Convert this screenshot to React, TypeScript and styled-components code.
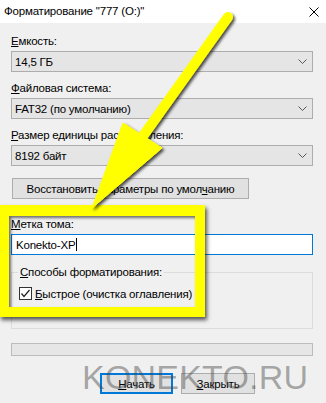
import styled, { createGlobalStyle } from 'styled-components';

const GlobalStyle = createGlobalStyle`
  html, body {
    margin: 0;
    padding: 0;
    background: #f0f0f0;
  }
  body {
    font-family: "Liberation Sans", Arial, sans-serif;
    font-size: 11.5px;
    letter-spacing: -0.2px;
    color: #000;
  }
`;

const Window = styled.div`
  position: relative;
  width: 326px;
  height: 403px;
  overflow: hidden;
  background: #f0f0f0;
`;

const TitleBar = styled.div`
  height: 23px;
  box-sizing: border-box;
  padding: 0 7px 0 4px;
  background: #fff;
  display: flex;
  align-items: center;
  justify-content: space-between;
  line-height: 15px;
`;

const Body = styled.div`
  display: flex;
  flex-direction: column;
  padding: 11px 13px 0 11px;
`;

const Label = styled.div<{ $top?: number }>`
  line-height: 15px;
  margin-top: ${(p) => p.$top ?? 0}px;
  margin-bottom: 2px;
  white-space: nowrap;
`;

const Combo = styled.div`
  height: 21px;
  box-sizing: border-box;
  border: 1px solid #adadad;
  background: #e5e5e5;
  display: flex;
  align-items: center;
  justify-content: space-between;
  padding: 0 5px 0 3px;
`;

const Button = styled.div<{ $width: number; $default?: boolean }>`
  width: ${(p) => p.$width}px;
  height: 21px;
  box-sizing: border-box;
  border: ${(p) => (p.$default ? '2px solid #0078d7' : '1px solid #adadad')};
  background: #e1e1e1;
  display: flex;
  align-items: center;
  justify-content: center;
  white-space: nowrap;
`;

const ResetButton = styled(Button)`
  margin-top: 12px;
  margin-left: 1px;
`;

const Input = styled.div`
  height: 21px;
  box-sizing: border-box;
  border: 1px solid #0078d7;
  background: #fff;
  display: flex;
  align-items: center;
  padding-left: 4px;
`;

const Caret = styled.span`
  display: inline-block;
  width: 1px;
  height: 13px;
  margin-left: 1px;
  background: #000;
`;

const Group = styled.fieldset`
  margin: 10px 0 0 0;
  padding: 7px 0 28px 7px;
  border: 1px solid #dcdcdc;
  min-width: 0;
`;

const Legend = styled.legend`
  padding: 0 2px;
  margin-left: -1px;
  line-height: 15px;
`;

const CheckRow = styled.div`
  display: flex;
  align-items: center;
  height: 13px;
  gap: 3px;
  white-space: nowrap;
`;

const CheckBox = styled.span`
  width: 13px;
  height: 13px;
  box-sizing: border-box;
  border: 1px solid #333;
  background: #fff;
  display: flex;
  align-items: center;
  justify-content: center;
`;

const Progress = styled.div`
  margin-top: 14px;
  height: 13px;
  box-sizing: border-box;
  border: 1px solid #bcbcbc;
  background: #e6e6e6;
`;

const ButtonRow = styled.div`
  margin-top: 17px;
  padding-left: 89px;
  display: flex;
  gap: 8px;
`;

const Highlight = styled.div`
  position: absolute;
  left: -1px;
  top: 205px;
  width: 206px;
  height: 112px;
  box-sizing: border-box;
  border: 10px solid #ffff00;
  border-top-width: 11px;
  box-shadow: 2px 3px 4px rgba(0, 0, 0, 0.65), inset 2px 2px 3px rgba(0, 0, 0, 0.55);
  pointer-events: none;
`;

const Overlay = styled.svg`
  position: absolute;
  left: 0;
  top: 0;
  pointer-events: none;
`;

const Watermark = styled.div`
  position: absolute;
  left: 82px;
  top: 357px;
  font-family: "Liberation Sans", Arial, sans-serif;
  font-size: 34px;
  line-height: 40px;
  letter-spacing: 0.2px;
  color: rgba(70, 70, 70, 0.45);
  white-space: nowrap;
  pointer-events: none;
`;

const Chevron = () => (
  <svg width="9" height="5" viewBox="0 0 9 5">
    <polyline points="0.5,0.5 4.5,4.5 8.5,0.5" fill="none" stroke="#555" strokeWidth="1" />
  </svg>
);

const CloseIcon = () => (
  <svg width="10" height="10" viewBox="0 0 10 10">
    <path d="M0.5 0.5 L9.5 9.5 M9.5 0.5 L0.5 9.5" stroke="#000" strokeWidth="1" />
  </svg>
);

const App = () => {
  return (
    <Window>
      <GlobalStyle />
      <TitleBar>
        <span>Форматирование "777 (O:)"</span>
        <CloseIcon />
      </TitleBar>
      <Body>
        <Label>
          <u>Е</u>мкость:
        </Label>
        <Combo>
          <span>14,5 ГБ</span>
          <Chevron />
        </Combo>

        <Label $top={9}>
          <u>Ф</u>айловая система:
        </Label>
        <Combo>
          <span>FAT32 (по умолчанию)</span>
          <Chevron />
        </Combo>

        <Label $top={9}>
          <u>Р</u>азмер единицы распределения:
        </Label>
        <Combo>
          <span>8192 байт</span>
          <Chevron />
        </Combo>

        <ResetButton $width={237}>
          <span>
            Восстановить параметры по умол<u>ч</u>анию
          </span>
        </ResetButton>

        <Label $top={18}>
          <u>М</u>етка тома:
        </Label>
        <Input>
          Konekto-XP
          <Caret />
        </Input>

        <Group>
          <Legend>
            <u>С</u>пособы форматирования:
          </Legend>
          <CheckRow>
            <CheckBox>
              <svg width="11" height="11" viewBox="0 0 11 11">
                <polyline points="1.5,5.5 4,8.5 9.5,2" fill="none" stroke="#222" strokeWidth="1.2" />
              </svg>
            </CheckBox>
            <span>
              <u>Б</u>ыстрое (очистка оглавления)
            </span>
          </CheckRow>
        </Group>

        <Progress />

        <ButtonRow>
          <Button $width={73} $default>
            <span>
              <u>Н</u>ачать
            </span>
          </Button>
          <Button $width={74}>
            <span>
              <u>З</u>акрыть
            </span>
          </Button>
        </ButtonRow>
      </Body>

      <Watermark>KONEKTO.RU</Watermark>

      <Highlight />

      <Overlay width="326" height="403" viewBox="0 0 326 403">
        <defs>
          <filter id="arrowShadow" x="-20%" y="-20%" width="140%" height="140%">
            <feDropShadow dx="2" dy="2" stdDeviation="1.5" floodColor="#000" floodOpacity="0.7" />
          </filter>
        </defs>
        <g filter="url(#arrowShadow)" fill="#ffff00" stroke="#ffff00">
          <line x1="228" y1="17" x2="143" y2="136" strokeWidth="10" strokeLinecap="round" />
          <polygon points="123,123 162,148 92,208" strokeWidth="1" strokeLinejoin="miter" />
        </g>
      </Overlay>
    </Window>
  );
};

export default App;
